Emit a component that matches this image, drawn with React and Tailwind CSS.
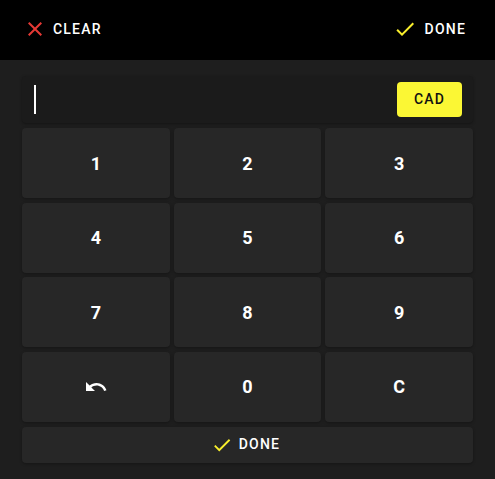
const keys = ['1', '2', '3', '4', '5', '6', '7', '8', '9', 'undo', '0', 'C'];

function CheckIcon({ className }) {
  return (
    <svg viewBox="0 0 24 24" className={className} fill="currentColor">
      <path d="M9 16.17L4.83 12l-1.42 1.41L9 19 21 7l-1.41-1.41z" />
    </svg>
  );
}

function CloseIcon({ className }) {
  return (
    <svg viewBox="0 0 24 24" className={className} fill="currentColor">
      <path d="M19 6.41L17.59 5 12 10.59 6.41 5 5 6.41 10.59 12 5 17.59 6.41 19 12 13.41 17.59 19 19 17.59 13.41 12z" />
    </svg>
  );
}

function UndoIcon({ className }) {
  return (
    <svg viewBox="0 0 24 24" className={className} fill="currentColor">
      <path d="M12.5 8c-2.65 0-5.05.99-6.9 2.6L2 7v9h9l-3.62-3.62c1.39-1.16 3.16-1.88 5.12-1.88 3.54 0 6.55 2.31 7.6 5.5l2.37-.78C21.08 11.03 17.15 8 12.5 8z" />
    </svg>
  );
}

export default function App() {
  return (
    <div
      className="w-[495px] h-[479px] bg-[#1e1e1e] text-white flex flex-col"
      style={{ fontFamily: 'Roboto, "Liberation Sans", sans-serif' }}
    >
      {/* top bar */}
      <div className="h-[60px] bg-black flex items-center justify-between pl-[23px] pr-[29px] pb-[2px] shrink-0">
        <button className="flex items-center gap-[6px] text-[14px] font-medium tracking-[1.2px]">
          <CloseIcon className="w-[24px] h-[24px] text-[#e53935]" />
          CLEAR
        </button>
        <button className="flex items-center gap-[8px] text-[14px] font-medium tracking-[1.2px]">
          <CheckIcon className="w-[24px] h-[24px] text-[#f9ef2c]" />
          DONE
        </button>
      </div>

      <div className="flex flex-col px-[22px] pt-[16px]">
        {/* input */}
        <div className="h-[47px] bg-[#1b1b1b] rounded-[4px] shadow-[0_1px_3px_rgba(0,0,0,0.35)] flex items-center justify-between pl-[12px] pr-[11px]">
          <div className="w-[2px] h-[29px] bg-white" />
          <div className="w-[65px] h-[35px] bg-[#fbf734] rounded-[4px] flex items-center justify-center text-[#111] text-[14px] font-medium tracking-[1.2px]">
            CAD
          </div>
        </div>

        {/* keypad */}
        <div className="grid grid-cols-3 gap-x-[4px] gap-y-[4.5px] mt-[5px]">
          {keys.map((k) => (
            <button
              key={k}
              className="h-[70px] bg-[#272727] rounded-[4px] shadow-[0_1px_3px_rgba(0,0,0,0.3)] flex items-center justify-center text-[18px] font-bold"
            >
              {k === 'undo' ? <UndoIcon className="w-[24px] h-[24px]" /> : k}
            </button>
          ))}
        </div>

        <button className="mt-[5px] h-[36px] bg-[#272727] rounded-[4px] shadow-[0_1px_3px_rgba(0,0,0,0.3)] flex items-center justify-center gap-[6px] pr-[4px] text-[14px] font-medium tracking-[1.2px]">
          <CheckIcon className="w-[22px] h-[22px] text-[#f9ef2c]" />
          DONE
        </button>
      </div>
    </div>
  );
}
